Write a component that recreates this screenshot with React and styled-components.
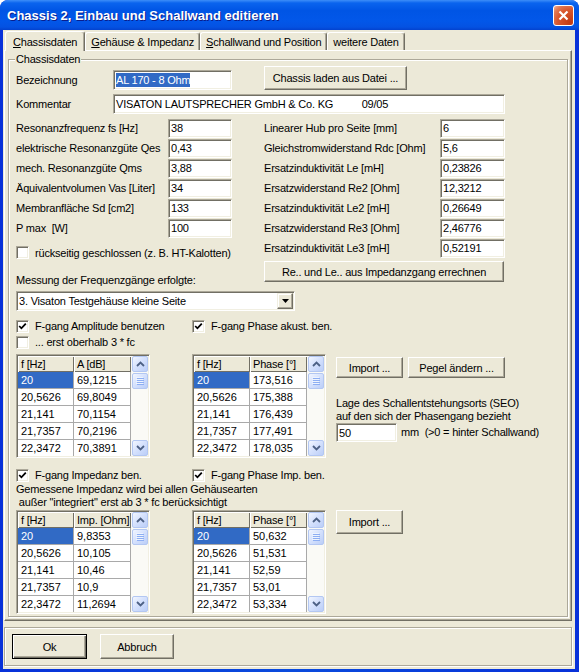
import React from "react";
import styled, { createGlobalStyle } from "styled-components";

const GlobalStyle = createGlobalStyle`
  html, body { margin: 0; padding: 0; background: #ffffff; }
  * { box-sizing: border-box; }
`;

const FACE = "#ECE9D8";
const SHADOW = "#ACA899";
const DARK = "#716F64";
const LIGHT = "#F1EFE2";

const leftParams = [
  ["Resonanzfrequenz fs [Hz]", "38"],
  ["elektrische Resonanzgüte Qes", "0,43"],
  ["mech. Resonanzgüte Qms", "3,88"],
  ["Äquivalentvolumen Vas [Liter]", "34"],
  ["Membranfläche Sd [cm2]", "133"],
  ["P max  [W]", "100"],
];

const rightParams = [
  ["Linearer Hub pro Seite [mm]", "6"],
  ["Gleichstromwiderstand Rdc [Ohm]", "5,6"],
  ["Ersatzinduktivität Le [mH]", "0,23826"],
  ["Ersatzwiderstand Re2 [Ohm]", "12,3212"],
  ["Ersatzinduktivität Le2 [mH]", "0,26649"],
  ["Ersatzwiderstand Re3 [Ohm]", "2,46776"],
  ["Ersatzinduktivität Le3 [mH]", "0,52191"],
];

const freqs = ["20", "20,5626", "21,141", "21,7357", "22,3472"];
const ampl = ["69,1215", "69,8049", "70,1154", "70,2196", "70,3891"];
const phaseAk = ["173,516", "175,388", "176,439", "177,491", "178,035"];
const imp = ["9,8353", "10,105", "10,46", "10,9", "11,2694"];
const phaseImp = ["50,632", "51,531", "52,59", "53,01", "53,334"];

const Window = styled.div`
  width: 579px;
  height: 672px;
  display: flex;
  flex-direction: column;
  background: linear-gradient(90deg, #0831D9 0%, #0A4BDD 50%, #0831D9 100%);
  border-radius: 8px 8px 0 0;
  overflow: hidden;
  font-family: "Liberation Sans", Arial, sans-serif;
  font-size: 11px;
  letter-spacing: -0.2px;
  color: #000;
`;

const TitleBar = styled.div`
  height: 30px;
  flex: none;
  display: flex;
  align-items: center;
  justify-content: space-between;
  padding: 1px 5px 0 7px;
  background: linear-gradient(
    180deg,
    #3D8EF8 0%,
    #0A64EE 10%,
    #0055E5 35%,
    #0257E9 70%,
    #0452E2 90%,
    #0342CF 100%
  );
`;

const Title = styled.span`
  font-size: 13px;
  font-weight: bold;
  letter-spacing: 0;
  color: #fff;
  text-shadow: 1px 1px #0A1E8C;
`;

const CloseBtn = styled.div`
  width: 21px;
  height: 21px;
  margin-top: -1px;
  border: 1px solid #fff;
  border-radius: 3px;
  background: radial-gradient(circle at 85% 85%, #C23A12 0%, #D9572E 55%, #E07A55 80%, #F4B49C 100%);
  display: flex;
  align-items: center;
  justify-content: center;
`;

const Client = styled.div`
  flex: 1;
  margin: 0 4px 3px 3px;
  background: ${FACE};
  display: flex;
  flex-direction: column;
  padding: 0 3px 0 1px;
`;

const TabStrip = styled.div`
  height: 20px;
  flex: none;
  display: flex;
  align-items: flex-end;
  padding-left: 1px;
`;

const Tab = styled.div`
  height: ${(p) => (p.$active ? 20 : 18)}px;
  margin-bottom: ${(p) => (p.$active ? -1 : 0)}px;
  padding: 0 ${(p) => (p.$active ? 7 : 5)}px;
  display: flex;
  align-items: center;
  background: ${FACE};
  border-top: 1px solid #fff;
  border-left: 1px solid #fff;
  border-right: 1px solid ${DARK};
  box-shadow: inset -1px 0 ${SHADOW};
  border-radius: 3px 3px 0 0;
  position: relative;
  z-index: ${(p) => (p.$active ? 1 : 0)};
  white-space: pre;
`;

const Panel = styled.div`
  height: 571px;
  flex: none;
  display: flex;
  border-top: 1px solid #fff;
  border-left: 1px solid #fff;
  border-right: 1px solid ${DARK};
  border-bottom: 1px solid ${DARK};
  box-shadow: inset -1px -1px ${SHADOW};
  padding: 8px 3px 3px 3px;
`;

const GroupBox = styled.div`
  flex: 1;
  position: relative;
  border: 1px solid ${SHADOW};
  box-shadow: inset 1px 1px #fff, 1px 1px #fff;
  padding: 6px 7px 2px 7px;
  display: flex;
  flex-direction: column;
`;

const Legend = styled.span`
  position: absolute;
  top: -7px;
  left: 6px;
  padding: 0 1px;
  line-height: 13px;
  background: ${FACE};
`;

const Row = styled.div`
  display: flex;
  align-items: ${(p) => p.$align || "center"};
  height: ${(p) => p.$h}px;
  margin-top: ${(p) => p.$mt || 0}px;
  flex: none;
`;

const Label = styled.span`
  width: ${(p) => p.$w}px;
  flex: none;
  white-space: pre;
  line-height: 20px;
`;

const Field = styled.div`
  width: ${(p) => p.$w}px;
  height: ${(p) => p.$h || 20}px;
  flex: none;
  display: flex;
  align-items: center;
  padding: 0 2px;
  background: #fff;
  white-space: pre;
  overflow: hidden;
  border: 1px solid;
  border-color: ${SHADOW} #fff #fff ${SHADOW};
  box-shadow: inset 1px 1px ${DARK}, inset -1px -1px ${LIGHT};
`;

const Selected = styled.span`
  background: #316AC5;
  color: #fff;
  line-height: 14px;
`;

const Button = styled.button`
  width: ${(p) => p.$w}px;
  height: ${(p) => p.$h || 21}px;
  flex: none;
  margin: ${(p) => p.$m || 0};
  padding: 0;
  font: inherit;
  letter-spacing: inherit;
  color: #000;
  background: ${FACE};
  border: 1px solid;
  border-color: #fff ${DARK} ${DARK} #fff;
  box-shadow: inset -1px -1px ${SHADOW};
  display: flex;
  align-items: center;
  justify-content: center;
  white-space: pre;
`;

const DefaultButton = styled(Button)`
  border: 1px solid #000;
  box-shadow: inset 1px 1px #fff, inset -1px -1px ${DARK}, inset -2px -2px ${SHADOW};
`;

const Columns = styled.div`
  display: flex;
  margin-top: 4px;
  flex: none;
`;

const Col = styled.div`
  width: ${(p) => p.$w}px;
  flex: none;
  display: flex;
  flex-direction: column;
`;

const ParamRow = styled.div`
  display: flex;
  align-items: center;
  height: 20px;
`;

const CheckLine = styled.div`
  display: flex;
  align-items: center;
  height: ${(p) => p.$h || 16}px;
  margin-top: ${(p) => p.$mt || 0}px;
  flex: none;
`;

const CheckItem = styled.div`
  display: flex;
  align-items: center;
  width: ${(p) => (p.$w ? `${p.$w}px` : "auto")};
  flex: none;
  white-space: pre;
`;

const Box = styled.div`
  width: 13px;
  height: 13px;
  flex: none;
  margin-right: 6px;
  background: #fff;
  border: 1px solid;
  border-color: ${SHADOW} #fff #fff ${SHADOW};
  box-shadow: inset 1px 1px ${DARK}, inset -1px -1px ${LIGHT};
  display: flex;
  align-items: center;
  justify-content: center;
`;

const Caption = styled.div`
  line-height: 13px;
  margin-top: ${(p) => p.$mt || 0}px;
  margin-left: ${(p) => p.$ml || 0}px;
  white-space: pre;
  flex: none;
`;

const Combo = styled(Field)`
  padding: 0 0 0 2px;
  margin-top: 4px;
`;

const DropBtn = styled.div`
  width: 16px;
  height: 16px;
  margin-left: auto;
  margin-right: 1px;
  background: ${FACE};
  border: 1px solid;
  border-color: ${LIGHT} ${DARK} ${DARK} ${LIGHT};
  box-shadow: inset -1px -1px ${SHADOW}, inset 1px 1px #fff;
  display: flex;
  align-items: center;
  justify-content: center;
`;

const GridsRow = styled.div`
  display: flex;
  align-items: flex-start;
  margin-top: ${(p) => p.$mt || 0}px;
  flex: none;
`;

const GridBox = styled.div`
  width: 134px;
  height: 104px;
  flex: none;
  display: flex;
  margin-left: ${(p) => p.$ml || 0}px;
  background: #fff;
  padding: 1px;
  border: 1px solid;
  border-color: ${SHADOW} #fff #fff ${SHADOW};
  box-shadow: inset 1px 1px ${DARK}, inset -1px -1px ${LIGHT};
  overflow: hidden;
`;

const Table = styled.div`
  display: grid;
  grid-template-columns: 56px 57px;
  grid-auto-rows: 17px;
  grid-template-rows: 16px;
  align-content: start;
  flex: none;
  overflow: hidden;
  height: 100px;
`;

const HeadCell = styled.div`
  background: ${FACE};
  box-shadow: inset 1px 1px #fff, inset -1px -1px ${DARK};
  padding-left: 3px;
  display: flex;
  align-items: center;
  white-space: pre;
  overflow: hidden;
`;

const Cell = styled.div`
  border-right: 1px solid #A9A9A9;
  border-bottom: 1px solid #A9A9A9;
  padding-left: 3px;
  display: flex;
  align-items: center;
  letter-spacing: 0;
  background: ${(p) => (p.$sel ? "#316AC5" : "#fff")};
  color: ${(p) => (p.$sel ? "#fff" : "#000")};
`;

const Scroll = styled.div`
  width: 17px;
  flex: none;
  display: flex;
  flex-direction: column;
  padding-left: 1px;
  background: #FAFAF6;
`;

const ScrollPart = styled.div`
  height: ${(p) => p.$h}px;
  flex: none;
  margin-top: ${(p) => p.$mt || "0"};
  border: 1px solid #B3C7F2;
  border-radius: 2px;
  background: linear-gradient(135deg, #F2F6FF 0%, #D6E2FD 45%, #BBCEF8 100%);
  display: flex;
  align-items: center;
  justify-content: center;
`;

const Side = styled.div`
  display: flex;
  flex-direction: column;
  margin-left: 10px;
  padding-top: ${(p) => p.$pt || 0}px;
`;

const BottomBar = styled.div`
  height: 39px;
  flex: none;
  margin-top: 6px;
  border: 1px solid ${SHADOW};
  box-shadow: inset 1px 1px #fff, 1px 1px #fff;
  display: flex;
  align-items: flex-start;
  padding: 6px 0 0 7px;
`;

const Check = ({ checked }) => (
  <Box>
    {checked && (
      <svg width="9" height="9" viewBox="0 0 9 9">
        <polyline points="1.2,4 3.4,6.3 7.8,1.6" fill="none" stroke="#000" strokeWidth="1.8" />
      </svg>
    )}
  </Box>
);

const Arrow = ({ up }) => (
  <svg width="9" height="6" viewBox="0 0 9 6">
    <polyline
      points={up ? "1,5 4.5,1.5 8,5" : "1,1 4.5,4.5 8,1"}
      fill="none"
      stroke="#4D6185"
      strokeWidth="1.8"
    />
  </svg>
);

const Grip = () => (
  <svg width="8" height="8" viewBox="0 0 8 8">
    {[0, 2, 4, 6].map((y) => (
      <g key={y}>
        <rect x="0" y={y} width="7" height="1" fill="#EEF4FE" />
        <rect x="1" y={y + 1} width="7" height="1" fill="#8DAEF3" />
      </g>
    ))}
  </svg>
);

const Grid = ({ head, col, values, ml }) => (
  <GridBox $ml={ml}>
    <Table>
      <HeadCell>{head[0]}</HeadCell>
      <HeadCell>{head[1]}</HeadCell>
      {col.map((f, i) => (
        <React.Fragment key={f}>
          <Cell $sel={i === 0}>{f}</Cell>
          <Cell>{values[i]}</Cell>
        </React.Fragment>
      ))}
    </Table>
    <Scroll>
      <ScrollPart $h={16}>
        <Arrow up />
      </ScrollPart>
      <ScrollPart $h={16} $mt="1px">
        <Grip />
      </ScrollPart>
      <ScrollPart $h={16} $mt="auto">
        <Arrow />
      </ScrollPart>
    </Scroll>
  </GridBox>
);

export default function App() {
  return (
    <>
      <GlobalStyle />
      <Window>
        <TitleBar>
          <Title>Chassis 2, Einbau und Schallwand editieren</Title>
          <CloseBtn>
            <svg width="11" height="11" viewBox="0 0 11 11">
              <path d="M1.5 1.5 L9.5 9.5 M9.5 1.5 L1.5 9.5" stroke="#fff" strokeWidth="2.2" />
            </svg>
          </CloseBtn>
        </TitleBar>
        <Client>
          <TabStrip>
            <Tab $active>
              <u>C</u>hassisdaten
            </Tab>
            <Tab>
              <u>G</u>ehäuse &amp; Impedanz
            </Tab>
            <Tab>
              <u>S</u>challwand und Position
            </Tab>
            <Tab>weitere Daten</Tab>
          </TabStrip>
          <Panel>
            <GroupBox>
              <Legend>Chassisdaten</Legend>

              <Row $h={24} $align="flex-end">
                <Label $w={97}>Bezeichnung</Label>
                <Field $w={119}>
                  <Selected>AL 170 - 8 Ohm</Selected>
                </Field>
                <Button $w={143} $h={24} $m="0 0 0 32px">
                  Chassis laden aus Datei ...
                </Button>
              </Row>

              <Row $h={20} $mt={4}>
                <Label $w={97}>Kommentar</Label>
                <Field $w={392}>VISATON LAUTSPRECHER GmbH &amp; Co. KG          09/05</Field>
              </Row>

              <Columns>
                <Col $w={248}>
                  {leftParams.map(([l, v]) => (
                    <ParamRow key={l}>
                      <Label $w={152}>{l}</Label>
                      <Field $w={64} $h={19}>
                        {v}
                      </Field>
                    </ParamRow>
                  ))}
                  <CheckLine $h={13} $mt={8}>
                    <CheckItem>
                      <Check />
                      rückseitig geschlossen (z. B. HT-Kalotten)
                    </CheckItem>
                  </CheckLine>
                  <Caption $mt={15}>Messung der Frequenzgänge erfolgte:</Caption>
                </Col>
                <Col $w={241}>
                  {rightParams.map(([l, v]) => (
                    <ParamRow key={l}>
                      <Label $w={176}>{l}</Label>
                      <Field $w={65} $h={19}>
                        {v}
                      </Field>
                    </ParamRow>
                  ))}
                  <Button $w={240} $m="3px 0 0 0">
                    Re.. und Le.. aus Impedanzgang errechnen
                  </Button>
                </Col>
              </Columns>

              <Combo $w={279}>
                3. Visaton Testgehäuse kleine Seite
                <DropBtn>
                  <svg width="7" height="4" viewBox="0 0 7 4">
                    <path d="M0 0 H7 L3.5 4 Z" fill="#000" />
                  </svg>
                </DropBtn>
              </Combo>

              <CheckLine $mt={7}>
                <CheckItem $w={176}>
                  <Check checked />
                  F-gang Amplitude benutzen
                </CheckItem>
                <CheckItem>
                  <Check checked />
                  F-gang Phase akust. ben.
                </CheckItem>
              </CheckLine>
              <CheckLine>
                <CheckItem>
                  <Check />
                  ... erst oberhalb 3 * fc
                </CheckItem>
              </CheckLine>

              <GridsRow $mt={4}>
                <Grid head={["f [Hz]", "A [dB]"]} col={freqs} values={ampl} />
                <Grid head={["f [Hz]", "Phase [°]"]} col={freqs} values={phaseAk} ml={42} />
                <Side $pt={3}>
                  <Row $h={21}>
                    <Button $w={67}>Import ...</Button>
                    <Button $w={97} $m="0 0 0 5px">
                      Pegel ändern ...
                    </Button>
                  </Row>
                  <Caption $mt={19}>Lage des Schallentstehungsorts (SEO)</Caption>
                  <Caption>auf den sich der Phasengang bezieht</Caption>
                  <Row $h={19}>
                    <Field $w={61} $h={19}>
                      50
                    </Field>
                    <Caption $ml={4}>{"mm  (>0 = hinter Schallwand)"}</Caption>
                  </Row>
                </Side>
              </GridsRow>

              <CheckLine $mt={9}>
                <CheckItem $w={176}>
                  <Check checked />
                  F-gang Impedanz ben.
                </CheckItem>
                <CheckItem>
                  <Check checked />
                  F-gang Phase Imp. ben.
                </CheckItem>
              </CheckLine>
              <Caption>Gemessene Impedanz wird bei allen Gehäusearten</Caption>
              <Caption>{' außer "integriert" erst ab 3 * fc berücksichtigt'}</Caption>

              <GridsRow $mt={1}>
                <Grid head={["f [Hz]", "Imp. [Ohm]"]} col={freqs} values={imp} />
                <Grid head={["f [Hz]", "Phase [°]"]} col={freqs} values={phaseImp} ml={42} />
                <Side>
                  <Button $w={67} $h={24}>
                    Import ...
                  </Button>
                </Side>
              </GridsRow>
            </GroupBox>
          </Panel>
          <BottomBar>
            <DefaultButton $w={75} $h={25}>
              Ok
            </DefaultButton>
            <Button $w={74} $h={25} $m="0 0 0 13px">
              Abbruch
            </Button>
          </BottomBar>
        </Client>
      </Window>
    </>
  );
}
